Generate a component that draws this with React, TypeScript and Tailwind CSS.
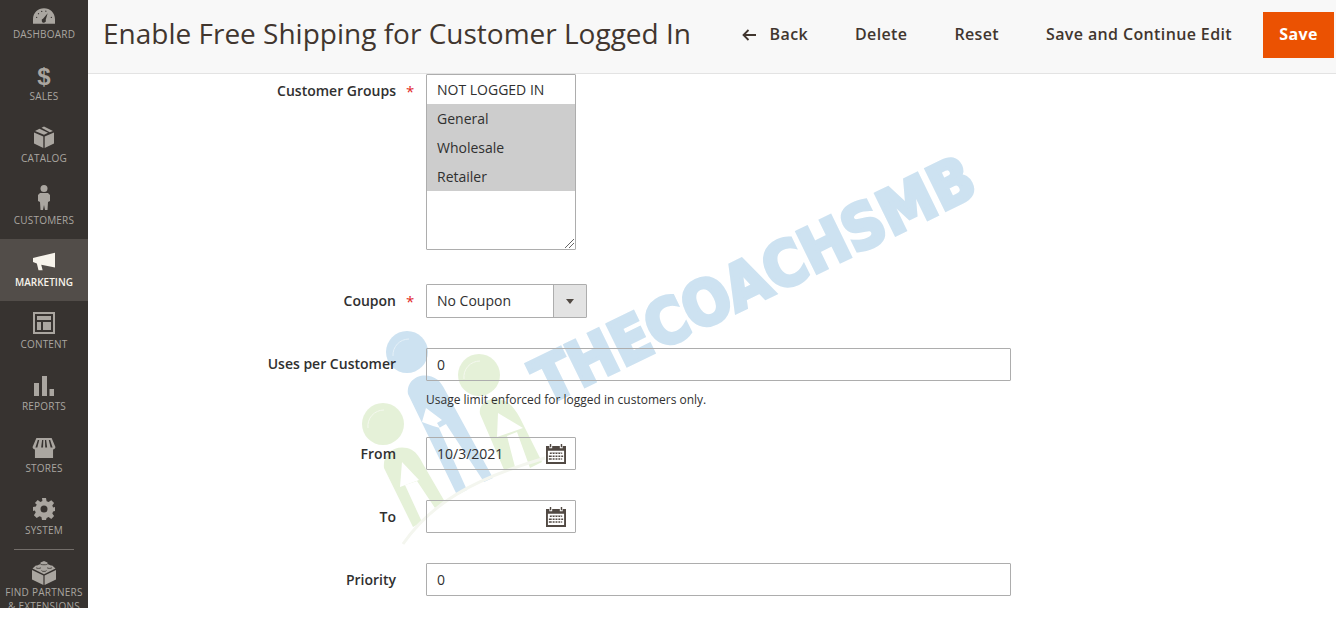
const navIcon = "#aaa6a0";

const Gauge = () => (
  <svg width="22" height="16" viewBox="0 0 24 17">
    <path fill={navIcon} fillRule="evenodd" d="M0 17v-5C0 5 5.400 0 12 0s12 5 12 12v5zM16 5.500l-4.800 5.700a2.300 2.300 0 1 0 2.700 1.300z" />
    <g fill="#373330">
      <circle cx="4" cy="10" r="0.700" />
      <circle cx="6" cy="6" r="0.700" />
      <circle cx="9.500" cy="3.500" r="0.700" />
      <circle cx="14" cy="3.200" r="0.700" />
      <circle cx="20" cy="10" r="0.700" />
    </g>
  </svg>
);

const Box = () => (
  <svg width="20" height="22" viewBox="0 0 20 22">
    <path fill={navIcon} d="M0 6.500 9.300 10.500V22L0 17.500zM20 6.500 10.700 10.500V22L20 17.500zM1 5 5.500 2.800 14 6.800 10 8.800zM7.500 1.800 10 0.500 19 5 15.800 6.200z" />
  </svg>
);

const Person = () => (
  <svg width="12" height="25" viewBox="0 0 12 25">
    <circle cx="6" cy="3.500" r="3.500" fill={navIcon} />
    <path fill={navIcon} d="M2 8h8l2 2v6l-2 1-.5 8H7l-1-5-1 5H2.500L2 17l-2-1v-6z" />
  </svg>
);

const Megaphone = () => (
  <svg width="22" height="20" viewBox="0 0 24 20">
    <path fill="#f7f3eb" d="M24 0v16L9 13l1.500 6H6L4.200 11.500 0 10V5.500L6.500 4z" />
  </svg>
);

const Layout = () => (
  <svg width="22" height="22" viewBox="0 0 22 22">
    <path fill={navIcon} fillRule="evenodd" d="M0 0h22v22H0zM2 2v18h18V2zM4 4h14v4H4zM4 10h4v8H4zM10 10h8v8h-8z" />
  </svg>
);

const Bars = () => (
  <svg width="20" height="20" viewBox="0 0 20 20">
    <path fill={navIcon} d="M0 7h5v13H0zM8 0h5v20H8zM15.500 13H20v7h-4.500z" />
  </svg>
);

const Store = () => (
  <svg width="24" height="20" viewBox="0 0 24 21">
    <path fill={navIcon} fillRule="evenodd" d="M4 0h16l4 9.500c0 1.500-1.400 2.500-2.500 2.500v9h-19v-9C1.400 12 0 11 0 9.500zM5.500 2 3 10h2l2-8zM10 2l-1 8h2l.3-8zM13 2l.3 8h2l-1-8zM17 2l2 8h2L18.500 2z" />
  </svg>
);

const Gear = () => (
  <svg width="22" height="22" viewBox="0 0 22 22">
    <path fill={navIcon} fillRule="evenodd" d="M9 0h4l.6 3.200 2 .8 2.700-1.800 2.800 2.800L19.300 7.600l.8 2L22 9v4l-1.900.4-.8 2 1.800 2.700-2.800 2.800-2.700-1.800-2 .8L13 22H9l-.6-2.900-2-.8-2.700 1.800-2.800-2.800 1.800-2.700-.8-2L0 13V9l2.900-.4.800-2L1.900 4.900l2.800-2.800 2.700 1.800 2-.8zM11 7.500a3.500 3.500 0 1 0 0 7 3.500 3.500 0 0 0 0-7z" />
  </svg>
);

const Brick = () => (
  <svg width="24" height="24" viewBox="0 0 24 24">
    <path fill={navIcon} d="M0 9 11.400 14.500V24L0 18.500zM24 9 12.600 14.500V24L24 18.500zM12 0l3.500 1.600V3L19 4.600l1.200-.2L23.500 7.500 12 13.200.5 7.500 3.800 4.400 5 4.600 8.500 3V1.600z" />
    <g fill="none" stroke="#373330" strokeWidth="0.800">
      <path d="M8.500 3c0 1 7 1 7 0M4 6.500c0 1.200 5 1.200 5 0M15 6.500c0 1.200 5 1.200 5 0M9.500 9.500c0 1.200 5 1.200 5 0" />
    </g>
  </svg>
);

const Calendar = () => (
  <svg width="20" height="21" viewBox="0 0 21 22">
    <path fill="#514943" fillRule="evenodd" d="M0 3h3.500v2.500h3V3h8v2.500h3V3H21v19H0zM2 8v12h17V8z" />
    <path fill="#514943" d="M4 1h1.500v3.500H4zM15.500 1H17v3.500h-1.500z" />
    <path fill="#514943" d="M4 10h13v1.600H4zM3 13h15v1.600H3zM3 16h14v1.600H3z" />
    <path fill="#fff" d="M6 10h1v8H6zM9 10h1v8H9zM12 10h1v8h-1zM15 10h1v8h-1z" />
  </svg>
);

const navItems = [
  { label: "DASHBOARD", icon: <Gauge /> },
  { label: "SALES", icon: <span className="inline-block translate-y-[3px] text-[24px] leading-[25px] font-bold font-['Liberation_Sans',sans-serif]">$</span> },
  { label: "CATALOG", icon: <Box /> },
  { label: "CUSTOMERS", icon: <Person /> },
  { label: "MARKETING", icon: <Megaphone />, active: true },
  { label: "CONTENT", icon: <Layout /> },
  { label: "REPORTS", icon: <Bars /> },
  { label: "STORES", icon: <Store /> },
  { label: "SYSTEM", icon: <Gear /> },
];

// watermark sits behind the form, coordinates are page pixels
const Watermark = () => (
  <svg className="absolute left-[350px] top-[140px] pointer-events-none" width="640" height="420" viewBox="350 140 640 420">
    <text
      transform="translate(546 405) rotate(-26)"
      fontFamily="'DejaVu Sans', sans-serif"
      fontWeight="700"
      fontSize="62"
      textLength="483"
      lengthAdjust="spacingAndGlyphs"
      fill="#cde2f1"
      stroke="#cde2f1"
      strokeWidth="4"
    >
      THECOACHSMB
    </text>

    <circle cx="407" cy="352" r="21" fill="#cde2f1" />
    <path fill="none" stroke="#e6f1f8" strokeWidth="1" d="M393 356a16 16 0 0 1 16-17" />
    <path fill="#cde2f1" d="M408 394C406 378 424 370 438 380 441 383 443 386 445 390L493 478 484 482 446 424 439 428 467 490 457 495z" />
    <path fill="#fff" d="M426 408 442 420 437 423 440 428 433 426 422 422z" />

    <circle cx="383" cy="424" r="21" fill="#e5f1d8" />
    <path fill="none" stroke="#f5f9ef" strokeWidth="1" d="M368 428a16 16 0 0 1 16-18" />
    <path fill="#e5f1d8" d="M384 468C382 452 398 443 412 450 417 453 420 458 423 464L445 502 435 508 417 481 405 485 422 522 413 527z" />
    <path fill="#fff" d="M402 462 419 480 400 487z" />

    <circle cx="479" cy="375" r="21" fill="#e5f1d8" />
    <path fill="none" stroke="#f5f9ef" strokeWidth="1" d="M464 379a16 16 0 0 1 16-18" />
    <path fill="#e5f1d8" d="M480 414C478 403 490 396 502 400 510 402 515 409 520 418L542 462 530 468 517 432 507 436 515 467 505 472z" />
    <path fill="#fff" d="M498 413 523 428 497 437z" />

    <path d="M403 544C430 505 470 480 545 458" fill="none" stroke="#f4f6ef" strokeWidth="3" />
  </svg>
);

const fieldClass = "border border-[#adadad] rounded-[1px]";
const labelClass = "w-[308px] text-right text-[14px] font-semibold text-[#303030]";
const starClass = "w-[30px] pl-[10px] text-[15px] text-[#e22626]";

const Row = ({ label, required, lift, className, children }: { label: string; required?: boolean; lift?: boolean; className?: string; children: React.ReactNode }) => (
  <div className={`flex items-center ${className ?? ""}`}>
    <div className={`${labelClass} ${lift ? "pb-[2px]" : ""}`}>{label}</div>
    <div className={starClass}>{required ? "*" : ""}</div>
    {children}
  </div>
);

const DateField = ({ value }: { value?: string }) => (
  <div className={`${fieldClass} w-[150px] h-[33px] flex items-center justify-between pl-[10px] pr-[9px] text-[14px] text-[#303030]`}>
    <span>{value}</span>
    <Calendar />
  </div>
);

export default function App() {
  return (
    <div className="relative w-[1336px] h-[617px] overflow-hidden bg-white flex items-start font-['Open_Sans',sans-serif]">
      <Watermark />
      <aside className="relative z-10 w-[88px] h-[608px] shrink-0 overflow-hidden bg-[#373330] flex flex-col">
        <div className="-mt-[9px]">
          {navItems.map((item) => (
            <div
              key={item.label}
              className={`h-[62px] flex flex-col items-center justify-end pb-[12px] ${item.active ? "bg-[#524d49] text-[#f7f3eb] font-semibold" : "text-[#aaa6a0] tracking-[0.2px]"}`}
            >
              <div className="h-[25px] flex items-end justify-center mb-[3px]">{item.icon}</div>
              <div className="text-[10px] leading-[14px]">{item.label}</div>
            </div>
          ))}
        </div>
        <div className="mx-[14px] border-t border-[#736e6a]" />
        <div className="flex flex-col items-center pt-[11px] text-[#aaa6a0]">
          <Brick />
          <div className="text-[10px] leading-[13.500px] tracking-[0.25px] text-center mt-[1px] whitespace-nowrap">
            FIND PARTNERS
            <br />& EXTENSIONS
          </div>
        </div>
      </aside>

      <main className="relative z-10 flex-1">
        <header className="h-[74px] bg-[#f8f8f8] border-b border-[#e3e3e3] flex items-start">
          <h1 className="pl-[15px] pt-[13px] text-[28px] leading-[40px] font-normal text-[#41362f] whitespace-nowrap">
            Enable Free Shipping for Customer Logged In
          </h1>
          <div className="ml-auto flex items-center h-[46px] mt-[12px] pr-[2px] text-[16px] tracking-[0.37px] font-semibold text-[#41362f]">
            <svg className="mr-[14px]" width="14" height="12" viewBox="0 0 14 12" fill="none" stroke="#41362f" strokeWidth="1.800">
              <path d="M14 6H2M6.500 1 1.500 6l5 5" />
            </svg>
            <span className="mr-[47px] pb-[2px]">Back</span>
            <span className="mr-[47px] pb-[2px]">Delete</span>
            <span className="mr-[47px] pb-[2px]">Reset</span>
            <span className="mr-[31px] pb-[2px]">Save and Continue Edit</span>
            <div className="w-[71px] h-[46px] pb-[2px] bg-[#eb5202] text-white flex items-center justify-center font-bold">Save</div>
          </div>
        </header>

        <div>
          <div className="flex items-start">
            <div className={`${labelClass} pt-[6px]`}>Customer Groups</div>
            <div className={`${starClass} pt-[6px]`}>*</div>
            <div className={`${fieldClass} relative w-[150px] h-[176px] text-[14px] text-[#303030]`}>
              <div className="h-[29px] pl-[10px] flex items-center">NOT LOGGED IN</div>
              <div className="bg-[#cdcdcd]">
                <div className="h-[29px] pl-[10px] flex items-center">General</div>
                <div className="h-[29px] pl-[10px] flex items-center">Wholesale</div>
                <div className="h-[29px] pl-[10px] flex items-center">Retailer</div>
              </div>
              <svg className="absolute right-[1px] bottom-[1px]" width="9" height="9" viewBox="0 0 9 9" stroke="#666" fill="none">
                <path d="M0 9 9 0M4 9l5-5" />
              </svg>
            </div>
          </div>

          <Row label="Coupon" required lift className="mt-[34px]">
            <div className={`${fieldClass} w-[161px] h-[34px] flex items-stretch text-[14px] text-[#303030]`}>
              <div className="flex-1 pl-[10px] pb-[2px] flex items-center">No Coupon</div>
              <div className="w-[33px] bg-[#e3e3e3] border-l border-[#adadad] flex items-center justify-center">
                <div className="w-0 h-0 border-l-[4px] border-r-[4px] border-t-[5px] border-l-transparent border-r-transparent border-t-[#514943]" />
              </div>
            </div>
          </Row>

          <Row label="Uses per Customer" lift className="mt-[30px]">
            <div className={`${fieldClass} w-[585px] h-[33px] flex items-center pl-[10px] text-[14px] text-[#303030]`}>0</div>
          </Row>
          <div className="ml-[338px] mt-[11px] text-[12px] leading-[16px] text-[#303030]">Usage limit enforced for logged in customers only.</div>

          <Row label="From" className="mt-[29px]">
            <DateField value="10/3/2021" />
          </Row>
          <Row label="To" className="mt-[30px]">
            <DateField />
          </Row>
          <Row label="Priority" className="mt-[30px]">
            <div className={`${fieldClass} w-[585px] h-[33px] flex items-center pl-[10px] text-[14px] text-[#303030]`}>0</div>
          </Row>
        </div>
      </main>
    </div>
  );
}
